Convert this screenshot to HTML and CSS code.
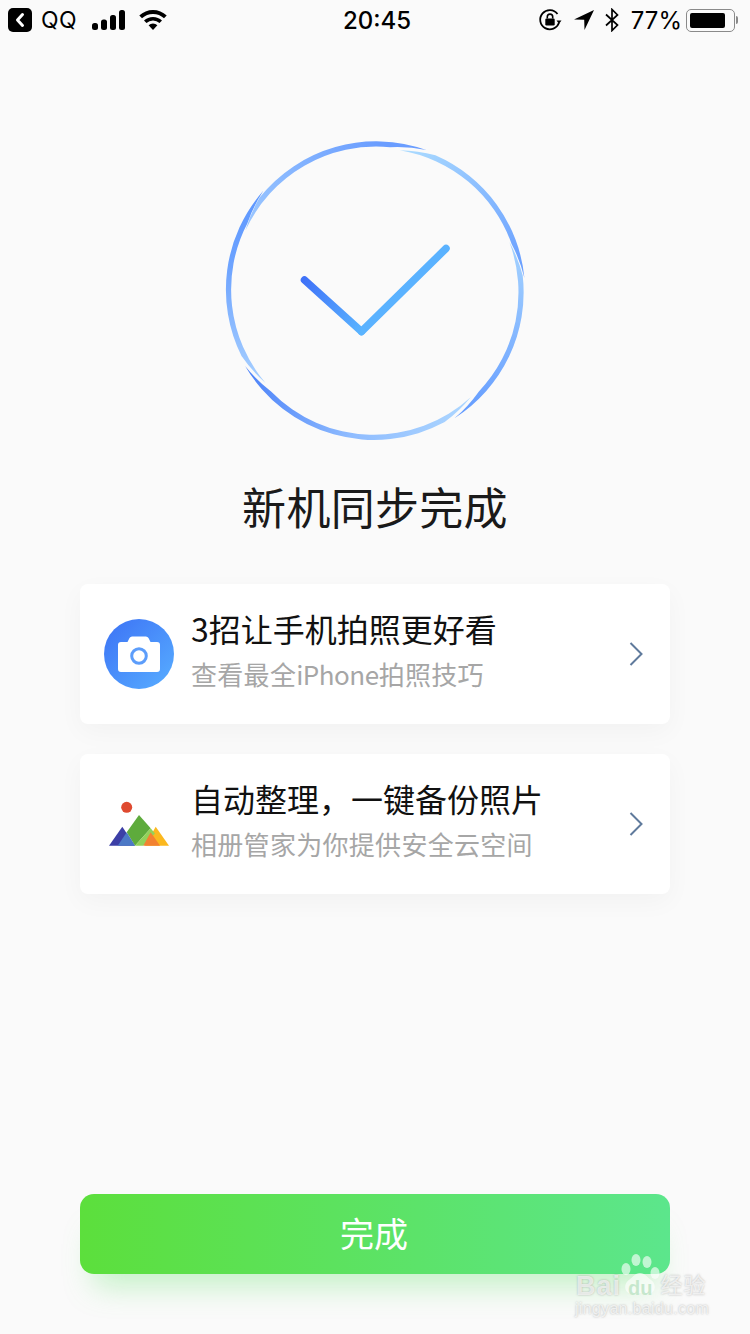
FILE: index.html
```html
<!DOCTYPE html>
<html lang="zh-CN">
<head>
    <meta charset="UTF-8">
    <title>新机同步完成</title>
    <link rel="stylesheet" href="styles.css">
</head>
<body>
    <div class="status-bar">
        <div class="status-left">
            <svg class="back-badge" width="24" height="24" viewBox="0 0 24 24">
                <rect width="24" height="24" rx="5" fill="#000"/>
                <path d="M14.5 6.5 9.5 12l5 5.5" fill="none" stroke="#fff" stroke-width="3" stroke-linecap="round" stroke-linejoin="round"/>
            </svg>
            <span class="carrier">QQ</span>
            <svg class="signal" width="34" height="20" viewBox="0 0 34 20">
                <rect x="0" y="13" width="6" height="7" rx="2.5"/>
                <rect x="9" y="9.500" width="6" height="10.500" rx="2.500"/>
                <rect x="18" y="5" width="6" height="15" rx="2.500"/>
                <rect x="27" y="0" width="6" height="20" rx="2.500"/>
            </svg>
            <svg class="wifi" width="28" height="20" viewBox="0 0 28 20">
                <path d="M14 20 9.600 15.300a6.400 6.400 0 0 1 8.800 0Z"/>
                <path d="M7.500 13.100 5 10.500a13 13 0 0 1 18 0l-2.500 2.600a9.400 9.400 0 0 0-13 0Z"/>
                <path d="M3 8.300.300 5.500a20 20 0 0 1 27.400 0L25 8.300a16 16 0 0 0-22 0Z"/>
            </svg>
        </div>
        <span class="clock">20:45</span>
        <div class="status-right">
            <svg class="rotate-lock" width="24" height="24" viewBox="0 0 24 24">
                <path d="M21 14.500A9.600 9.600 0 1 1 19.500 6" fill="none" stroke="#000" stroke-width="1.800"/>
                <path d="M18.500 12.500h5L21 15.800Z"/>
                <rect x="7.300" y="10.500" width="9.400" height="7" rx="1.200"/>
                <path d="M9.300 10.500V8.800a2.700 2.700 0 0 1 5.400 0v1.700" fill="none" stroke="#000" stroke-width="1.600"/>
            </svg>
            <svg class="location" width="20" height="20" viewBox="0 0 20 20">
                <path d="M20 0 0 9.500l10.200.3.300 10.200Z"/>
            </svg>
            <svg class="bluetooth" width="14" height="24" viewBox="0 0 14 24">
                <path d="M1 6.500 12.500 17 7 22.500V1.500L12.500 7 1 17.500" fill="none" stroke="#000" stroke-width="1.700"/>
            </svg>
            <span class="battery-text">77%</span>
            <div class="battery">
                <div class="battery-level"></div>
            </div>
            <div class="battery-tip"></div>
        </div>
    </div>

    <svg class="ring" width="300" height="300" viewBox="0 0 300 300">
        <defs>
            <linearGradient id="arcTop" gradientUnits="userSpaceOnUse" x1="20" y1="90" x2="201" y2="9">
                <stop offset="0" stop-color="#9cc8ff"/>
                <stop offset="0.4" stop-color="#82b2ff"/>
                <stop offset="0.8" stop-color="#6a9dff"/>
            </linearGradient>
            <linearGradient id="arcUpperRight" gradientUnits="userSpaceOnUse" x1="175" y1="9" x2="299" y2="137">
                <stop offset="0" stop-color="#acdcff"/>
                <stop offset="1" stop-color="#669cff"/>
            </linearGradient>
            <linearGradient id="arcRight" gradientUnits="userSpaceOnUse" x1="284" y1="101" x2="229" y2="277">
                <stop offset="0" stop-color="#a4d2ff"/>
                <stop offset="1" stop-color="#629aff"/>
            </linearGradient>
            <linearGradient id="arcBottom" gradientUnits="userSpaceOnUse" x1="246" y1="256" x2="20" y2="225">
                <stop offset="0" stop-color="#acd6ff"/>
                <stop offset="0.5" stop-color="#8fbcff"/>
                <stop offset="1" stop-color="#4a80f8"/>
            </linearGradient>
            <linearGradient id="arcLeft" gradientUnits="userSpaceOnUse" x1="40" y1="242" x2="38" y2="50">
                <stop offset="0" stop-color="#a8d0ff"/>
                <stop offset="0.6" stop-color="#6ea4ff"/>
                <stop offset="1" stop-color="#5c96ff"/>
            </linearGradient>
        </defs>
        <!-- even band, tapering only where one arc overlaps the next -->
        <path fill="url(#arcTop)" d="M20.400 89.600A146 146 0 0 1 34.600 56.500A149.300 149.300 0 0 1 201.300 9A147 147 0 0 0 165.100 6.300A143.700 143.700 0 0 0 20.400 89.600Z"/>
        <path fill="url(#arcUpperRight)" d="M174.800 9.200A146 146 0 0 1 210.400 14.300A149.300 149.300 0 0 1 299.400 136.900A147 147 0 0 0 286.600 103A143.700 143.700 0 0 0 174.800 9.200Z"/>
        <path fill="url(#arcRight)" d="M284.400 101.100A146 146 0 0 1 297.700 134.500A149.300 149.300 0 0 1 229.500 277.200A147 147 0 0 0 253.900 250.400A143.700 143.700 0 0 0 284.400 101.100Z"/>
        <path fill="url(#arcBottom)" d="M245.700 256.300A146 146 0 0 1 219.700 281.100A149.300 149.300 0 0 1 20.100 225A147 147 0 0 0 46.100 250.400A143.700 143.700 0 0 0 245.700 256.300Z"/>
        <path fill="url(#arcLeft)" d="M40.500 241.900A146 146 0 0 1 16.500 215.100A149.300 149.300 0 0 1 38.500 49.600A147 147 0 0 0 22.400 82.200A143.700 143.700 0 0 0 40.500 241.900Z"/>
    </svg>

    <svg class="check" width="160" height="100" viewBox="0 0 160 100">
        <defs>
            <linearGradient id="checkShort" gradientUnits="userSpaceOnUse" x1="9" y1="42" x2="67" y2="93">
                <stop offset="0" stop-color="#3f72f8"/>
                <stop offset="1" stop-color="#5ab4ff"/>
            </linearGradient>
        </defs>
        <path d="M66.500 93.500 151 10.500" fill="none" stroke="#5ab2ff" stroke-width="7.500" stroke-linecap="round"/>
        <path d="M9.500 42 66.500 93.500" fill="none" stroke="url(#checkShort)" stroke-width="7.500" stroke-linecap="round"/>
    </svg>

    <h1 class="title">新机同步完成</h1>

    <div class="card">
        <svg class="card-icon" width="70" height="70" viewBox="0 0 70 70">
            <defs>
                <linearGradient id="cameraBg" x1="0" y1="0" x2="1" y2="1">
                    <stop offset="0.1" stop-color="#3f78f6"/>
                    <stop offset="0.9" stop-color="#55a8ff"/>
                </linearGradient>
            </defs>
            <circle cx="35" cy="35" r="35" fill="url(#cameraBg)"/>
            <path d="M17 23h6.500l2-4a3 3 0 0 1 2.700-1.500h13.600a3 3 0 0 1 2.700 1.500l2 4H53a3 3 0 0 1 3 3v24a3 3 0 0 1-3 3H17a3 3 0 0 1-3-3V26a3 3 0 0 1 3-3Z" fill="#fff"/>
            <circle cx="35" cy="37" r="7.300" fill="#fff" stroke="#5c9dfb" stroke-width="3"/>
        </svg>
        <div class="card-text">
            <div class="card-title">3招让手机拍照更好看</div>
            <div class="card-sub">查看最全<span class="latin">iPhone</span>拍照技巧</div>
        </div>
        <svg class="chevron" width="14" height="24" viewBox="0 0 14 24">
            <path d="M1.500 1 12.500 12 1.500 23" fill="none" stroke="#5f7a9c" stroke-width="2"/>
        </svg>
    </div>

    <div class="card">
        <svg class="card-icon" width="70" height="70" viewBox="0 0 70 70">
            <circle cx="22.700" cy="18.300" r="5.500" fill="#df4a30"/>
            <path d="M5 56.700 18.300 37.700 31 56.700Z" fill="#3c3fa6"/>
            <path d="M51.700 37.700 65 56.700H41Z" fill="#fbb81f"/>
            <path d="M35 26 46.700 39.300 31 56.700 22.700 43.300Z" fill="#5eab3c"/>
            <path d="M13.700 56.700 22.700 43.300 31 56.700Z" fill="#4c79c6"/>
            <path d="M46.700 39.300 51 44.500 39.300 56.700H31Z" fill="#92d15a"/>
            <path d="M46.700 43.300 56 56.700H39.300Z" fill="#f28131"/>
        </svg>
        <div class="card-text">
            <div class="card-title">自动整理，一键备份照片</div>
            <div class="card-sub">相册管家为你提供安全云空间</div>
        </div>
        <svg class="chevron" width="14" height="24" viewBox="0 0 14 24">
            <path d="M1.500 1 12.500 12 1.500 23" fill="none" stroke="#5f7a9c" stroke-width="2"/>
        </svg>
    </div>

    <button class="done">完成</button>

    <div class="watermark">
        <svg class="paw" width="50" height="44" viewBox="0 0 50 44">
            <ellipse cx="6" cy="16" rx="4.500" ry="6"/>
            <ellipse cx="16" cy="7" rx="4.500" ry="6"/>
            <ellipse cx="27" cy="9" rx="4.500" ry="6"/>
            <ellipse cx="35" cy="20" rx="4.500" ry="6"/>
            <path d="M20 20c5 0 7 4 11 7 6 4 5 14-4 14-3 0-4-1-7-1s-4 1-7 1c-9 0-10-10-4-14 4-3 6-7 11-7Z"/>
        </svg>
        <div class="wm-brand"><span>Bai</span><span class="wm-du">du</span><span class="wm-cn">经验</span></div>
        <div class="wm-url">jingyan.baidu.com</div>
    </div>
</body>
</html>
```

FILE: styles.css
```css
* {
    box-sizing: border-box;
}
html, body {
    margin: 0;
    height: 1334px;
    overflow: hidden;
}
body {
    position: relative;
    display: flex;
    flex-direction: column;
    align-items: center;
    padding-bottom: 60px;
    background: #fafafa;
    font-family: "Noto Sans CJK SC", "Noto Sans", sans-serif;
    color: #000;
}
.status-bar {
    position: relative;
    width: 100%;
    height: 40px;
    flex: none;
    display: flex;
    align-items: center;
    justify-content: space-between;
    padding: 0 8px;
    font-family: Inter, "Liberation Sans", sans-serif;
}
.status-left,
.status-right {
    display: flex;
    align-items: center;
}
.carrier {
    margin-left: 9px;
    font-size: 23px;
    letter-spacing: 0.5px;
}
.signal {
    margin-left: 15px;
}
.wifi {
    margin-left: 13px;
}
.clock {
    position: absolute;
    left: 0;
    right: 0;
    top: 6px;
    text-align: center;
    padding-left: 4px;
    font-size: 24px;
    font-weight: 500;
    line-height: 30px;
}
.status-right {
    padding-right: 4px;
}
.location {
    margin-left: 12px;
}
.bluetooth {
    margin-left: 11px;
}
.battery-text {
    margin-left: 12px;
    font-size: 24px;
}
.battery {
    width: 49px;
    height: 23px;
    margin-left: 4px;
    padding: 3px;
    border: 1.500px solid #8a8a8a;
    border-radius: 5px;
}
.battery-level {
    width: 35px;
    height: 100%;
    background: #000;
    border-radius: 2px;
}
.battery-tip {
    width: 2px;
    height: 8px;
    margin-left: 1px;
    background: #8a8a8a;
    border-radius: 0 2px 2px 0;
}
.ring {
    flex: none;
    margin-top: 101px;
}
.check {
    position: absolute;
    left: 295px;
    top: 238px;
}
.title {
    flex: none;
    margin: 35px 0 48px;
    font-size: 44px;
    font-weight: 400;
    line-height: 60px;
    letter-spacing: 0.3px;
    color: #1a1a1a;
}
.card {
    flex: none;
    width: 590px;
    height: 140px;
    margin-bottom: 30px;
    padding: 0 27px 0 24px;
    display: flex;
    align-items: center;
    background: #fff;
    border-radius: 8px;
    box-shadow: 0 8px 26px rgba(0, 0, 0, 0.035);
}
.card-icon {
    flex: none;
}
.card-text {
    flex: 1;
    margin-left: 17px;
    padding-bottom: 11px;
}
.card-title {
    font-size: 32px;
    line-height: 44px;
    color: #111;
}
.card-sub {
    margin-top: 6px;
    font-size: 26px;
    line-height: 36px;
    letter-spacing: 0.3px;
    color: #a6a6a6;
}
.latin {
    letter-spacing: -0.5px;
}
.chevron {
    flex: none;
}
.done {
    flex: none;
    width: 590px;
    height: 80px;
    margin-top: auto;
    padding: 0 2px 4px 0;
    border: 0;
    border-radius: 14px;
    background: linear-gradient(90deg, #5cdf3c, #5ce68c);
    box-shadow: 0 26px 30px -14px rgba(92, 225, 100, 0.35);
    color: #fff;
    font-family: inherit;
    font-size: 34px;
}
.watermark {
    position: absolute;
    left: 572px;
    top: 1252px;
    width: 140px;
    height: 70px;
    color: rgba(255, 255, 255, 0.7);
    font-family: "Liberation Sans", "Noto Sans CJK SC", sans-serif;
    text-shadow: 0 0 2px rgba(110, 110, 110, 0.5);
}
.paw {
    position: absolute;
    left: 48px;
    top: 1px;
    fill: rgba(255, 255, 255, 0.62);
}
.wm-brand {
    position: absolute;
    left: 4px;
    top: 17px;
    display: flex;
    font-size: 27px;
    font-weight: 700;
    line-height: 34px;
    letter-spacing: 1px;
}
.wm-du {
    margin-left: 7px;
    font-size: 20px;
    line-height: 38px;
    letter-spacing: 0;
    color: rgba(190, 228, 198, 0.85);
    text-shadow: none;
}
.wm-cn {
    margin-left: 8px;
    font-size: 22px;
    font-weight: 400;
    line-height: 34px;
}
.wm-url {
    position: absolute;
    left: 3px;
    top: 47px;
    font-size: 16px;
    line-height: 20px;
    letter-spacing: 0.3px;
}
```
